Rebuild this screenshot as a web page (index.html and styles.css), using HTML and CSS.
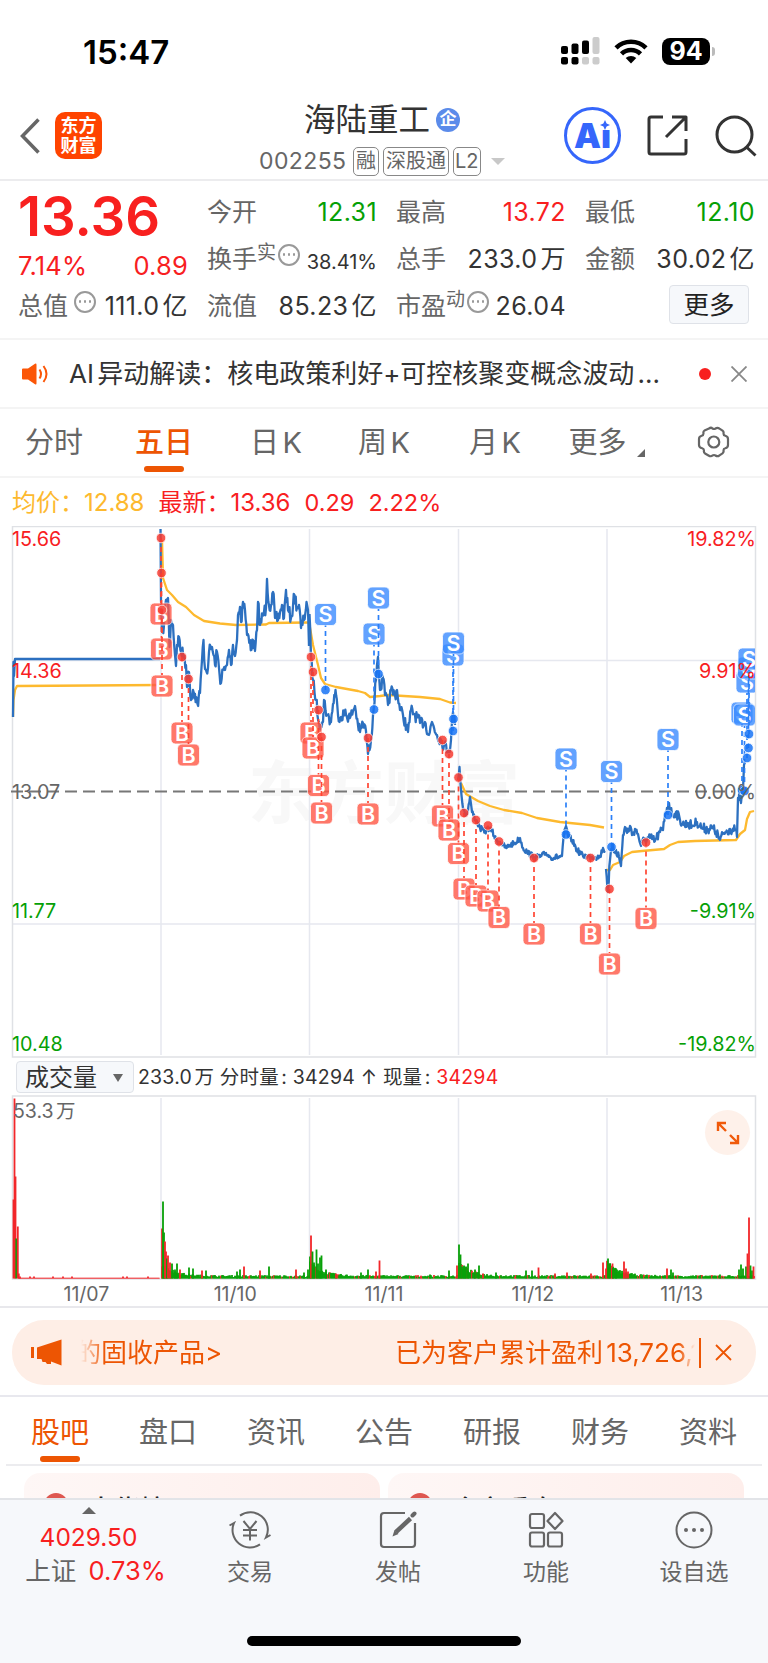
FILE: index.html
```html
<!DOCTYPE html>
<html lang="zh-CN">
<head>
    <meta charset="UTF-8">
    <meta name="viewport" content="width=device-width, initial-scale=1.0">
    <title>海陆重工 002255</title>
    <link rel="stylesheet" href="styles.css">
</head>
<body>
    <div class="status-bar">
        <span class="clock">15:47</span>
        <div class="status-icons">
            <svg width="39" height="28" viewBox="0 0 39 28">
                <g fill="#000">
                    <rect x="0" y="9" width="7" height="8" rx="2"/>
                    <rect x="10.5" y="6.500" width="7" height="10.500" rx="2"/>
                    <rect x="21" y="3.500" width="7" height="13.500" rx="2"/>
                    <rect x="0" y="20" width="7" height="7.500" rx="2"/>
                    <rect x="10.500" y="20" width="7" height="7.500" rx="2"/>
                </g>
                <g fill="#ccc">
                    <rect x="31.500" y="0" width="7" height="17" rx="2"/>
                    <rect x="21" y="20" width="7" height="7.500" rx="2"/>
                    <rect x="31.500" y="20" width="7" height="7.500" rx="2"/>
                </g>
            </svg>
            <svg class="wifi" width="34" height="25" viewBox="0 0 34 25">
                <g fill="none" stroke="#000" stroke-width="4.600">
                    <path d="M2 8.800a21.500 21.500 0 0 1 30 0"/>
                    <path d="M7.500 14.800a13.600 13.600 0 0 1 19 0"/>
                </g>
                <path d="M17 24.500l-5.300-5.600a8 8 0 0 1 10.600 0z"/>
            </svg>
            <span class="battery">94</span>
            <span class="battery-cap"></span>
        </div>
    </div>

    <header class="header">
        <div class="header-left">
            <svg width="20" height="36" viewBox="0 0 20 36" fill="none" stroke="#666" stroke-width="3.500"><path d="M18.500 1.500L2.500 18l16 16.500"/></svg>
            <div class="logo"><span>东方</span><span>财富</span></div>
        </div>
        <div class="header-title">
            <div class="name-row">
                <h1>海陆重工</h1>
                <span class="corp">企</span>
            </div>
            <div class="code-row">
                <span class="code">002255</span>
                <span class="tag">融</span>
                <span class="tag">深股通</span>
                <span class="tag">L2</span>
                <span class="caret"></span>
            </div>
        </div>
        <div class="header-right">
            <div class="ai">
                <span>Ai</span>
                <svg class="spark" width="10" height="10" viewBox="0 0 10 10"><path d="M5 0l1.600 3.400L10 5 6.600 6.600 5 10 3.400 6.600 0 5l3.400-1.600z" fill="#3566fb"/></svg>
            </div>
            <svg class="share" width="41" height="41" viewBox="0 0 41 41" fill="none" stroke="#333" stroke-width="3" stroke-linejoin="round">
                <path d="M16 2H4q-2 0-2 2v33q0 2 2 2h33q2 0 2-2V24"/>
                <path d="M25 2h14v14M39 2L19 22"/>
            </svg>
            <svg width="42" height="42" viewBox="0 0 42 42" fill="none" stroke="#333" stroke-width="3"><circle cx="19.500" cy="19.500" r="17.500"/><path d="M31.500 32l9 8.500"/></svg>
        </div>
    </header>

    <section class="quote">
        <div class="quote-col">
            <div class="price">13.36</div>
            <div class="cell change"><span>7.14%</span><span>0.89</span></div>
            <div class="cell"><span class="label">总值</span><i class="info"></i><span class="value">111.0亿</span></div>
        </div>
        <div class="quote-col">
            <div class="cell"><span class="label">今开</span><span class="value down">12.31</span></div>
            <div class="cell"><span class="label">换手</span><sup>实</sup><i class="info"></i><span class="value small">38.41%</span></div>
            <div class="cell"><span class="label">流值</span><span class="value">85.23亿</span></div>
        </div>
        <div class="quote-col">
            <div class="cell"><span class="label">最高</span><span class="value up">13.72</span></div>
            <div class="cell"><span class="label">总手</span><span class="value">233.0万</span></div>
            <div class="cell"><span class="label">市盈</span><sup>动</sup><i class="info"></i><span class="value">26.04</span></div>
        </div>
        <div class="quote-col">
            <div class="cell"><span class="label">最低</span><span class="value down">12.10</span></div>
            <div class="cell"><span class="label">金额</span><span class="value">30.02亿</span></div>
            <div class="cell"><button class="more-btn">更多</button></div>
        </div>
    </section>

    <section class="notice">
        <svg width="27" height="22" viewBox="0 0 27 22">
            <path d="M1 5.500h5L13 .8q1.500-.8 1.500 1v18.400q0 1.800-1.500 1L6 16.500H1q-1 0-1-1v-9q0-1 1-1z" fill="#fb5607"/>
            <path d="M17.500 6.500q3 4.500 0 9M21.500 3q6 8 0 16" fill="none" stroke="#fb5607" stroke-width="2"/>
        </svg>
        <p>AI异动解读：核电政策利好+可控核聚变概念波动...</p>
        <span class="dot"></span>
        <svg width="16" height="16" viewBox="0 0 16 16" stroke="#888" stroke-width="1.800"><path d="M.5.500l15 15M15.500.500l-15 15"/></svg>
    </section>

    <nav class="period-tabs">
        <span>分时</span>
        <span class="active">五日</span>
        <span>日K</span>
        <span>周K</span>
        <span>月K</span>
        <span class="period-more">更多<i class="corner"></i></span>
        <svg width="34" height="32" viewBox="0 0 34 32" fill="none" stroke="#666" stroke-width="2.200" stroke-linejoin="round">
            <path d="M12 2.500q2-1.500 3.500 0 1.500 1 3 0 2-1.500 4 .2l3 2q1.500 1.200 1 3 0 1.600 1.800 2 2.700.8 2.700 3.300v6q0 2.500-2.700 3.300-1.800.4-1.800 2 .5 1.800-1 3l-3 2q-2 1.700-4 .2-1.500-1-3 0-1.500 1.500-4 0l-3.500-2q-1.500-1.200-1-3 0-1.700-1.800-2.200Q2 21.500 2 19v-6q0-2.500 2.700-3.300 1.800-.5 1.800-2.200-.5-1.800 1-3z"/>
            <circle cx="16.800" cy="16" r="5.500"/>
        </svg>
    </nav>

    <div class="legend">
        <span class="avg">均价：12.88</span>
        <span>最新：13.36</span>
        <span>0.29</span>
        <span>2.22%</span>
    </div>

    <svg class="price-chart" id="priceChart" width="768" height="532" viewBox="0 526 768 532">
        <text class="watermark" x="384" y="818" text-anchor="middle">东方财富</text>
        <g class="grid-lines">
            <path d="M161 529v526M309.500 529v526M458.500 529v526M607 529v526M12 660.500h743M12 924h743"/>
            <rect x="12.500" y="526.500" width="743" height="530.500"/>
        </g>
        <path class="zero-line" d="M11 791.500h722"/>
        <g id="lines"></g>
        <g id="markers" clip-path="url(#plot)"></g>
        <clipPath id="plot"><rect x="12" y="526" width="743" height="531"/></clipPath>
        <g class="axis">
            <text class="up" x="12" y="545.500">15.66</text>
            <text class="up" x="12" y="678">14.36</text>
            <text x="12" y="798.500">13.07</text>
            <text class="down" x="12" y="918">11.77</text>
            <text class="down" x="12" y="1050.500">10.48</text>
        </g>
        <g class="axis axis-right">
            <text class="up" x="756" y="545.500">19.82%</text>
            <text class="up" x="756" y="678">9.91%</text>
            <text x="756" y="798.500">0.00%</text>
            <text class="down" x="756" y="918">-9.91%</text>
            <text class="down" x="756" y="1050.500">-19.82%</text>
        </g>
    </svg>

    <div class="volume-head">
        <button class="volume-btn">成交量<i></i></button>
        <span class="volume-info">233.0万 分时量: 34294 ↑ 现量: <b>34294</b></span>
    </div>

    <div class="volume-box">
        <svg id="volumeChart" width="768" height="185" viewBox="0 1095 768 185">
            <g class="grid-lines">
                <path d="M161 1098v180M309.500 1098v180M458.500 1098v180M607 1098v180"/>
                <rect x="12.500" y="1096" width="743" height="183"/>
            </g>
            <g id="bars"></g>
            <text class="volume-max" x="13" y="1118">53.3万</text>
        </svg>
        <span class="expand">
            <svg width="24" height="24" viewBox="0 0 24 24" fill="none" stroke="#f05a0a" stroke-width="2.400"><path d="M2 10V2h8M2 2l8 8M22 14v8h-8M22 22l-8-8"/></svg>
        </span>
    </div>

    <div class="dates">
        <span>11/07</span><span>11/10</span><span>11/11</span><span>11/12</span><span>11/13</span>
    </div>

    <section class="banner-wrap">
        <div class="banner">
            <svg width="31" height="27" viewBox="0 0 31 27" fill="#ed5503"><path d="M0 8h3v11H0zM6 8.500L30.500.500v26L20 22.500v2.500h-4l-1.500-2h-3l-1-3H6z"/></svg>
            <div class="marquee"><span>的固收产品&gt;</span><span>已为客户累计盈利13,726,1</span></div>
            <span class="divider"></span>
            <svg width="17" height="17" viewBox="0 0 17 17" stroke="#ed5503" stroke-width="1.800"><path d="M1 1l15 15M16 1L1 16"/></svg>
        </div>
    </section>

    <nav class="info-tabs">
        <span class="active">股吧</span>
        <span>盘口</span>
        <span>资讯</span>
        <span>公告</span>
        <span>研报</span>
        <span>财务</span>
        <span>资料</span>
    </nav>

    <div class="cards">
        <div class="card"><i></i><span>大佬榜</span></div>
        <div class="card"><i></i><span>今市看盘</span></div>
    </div>

    <footer class="bottom-bar">
        <div class="bottom-items">
            <div class="index">
                <i class="tri"></i>
                <span class="up">4029.50</span>
                <span class="index-name">上证 <b>0.73%</b></span>
            </div>
            <div class="action">
                <svg width="42" height="38" viewBox="0 0 42 38" fill="none" stroke="#666" stroke-width="2">
                    <path d="M11 4.600A17.500 17.500 0 0 1 37 26.500l4.500-2.500M31 33.400A17.500 17.500 0 0 1 5 12L.5 14.500"/>
                    <path d="M14.500 10l6.500 8 6.500-8M21 18v11.500M14 19h14M14 24.500h14"/>
                </svg>
                <span>交易</span>
            </div>
            <div class="action">
                <svg width="38" height="38" viewBox="0 0 38 38" fill="none" stroke="#666" stroke-width="2.200">
                    <path d="M26 2H5Q2 2 2 5v28q0 3 3 3h28q3 0 3-3V12"/>
                    <path d="M35.500 2.500l-2 2" stroke-width="4" stroke-linecap="round"/>
                    <path d="M31.500 7.500L17 21" stroke-width="4.500"/>
                    <path d="M15.500 19l4 4-6 2.500z" fill="#666" stroke="none"/>
                </svg>
                <span>发帖</span>
            </div>
            <div class="action">
                <svg width="36" height="36" viewBox="0 0 36 36" fill="none" stroke="#666" stroke-width="2.200" stroke-linejoin="round">
                    <rect x="2" y="2" width="14" height="14" rx="2"/>
                    <rect x="2" y="20.500" width="14" height="14" rx="2"/>
                    <rect x="20" y="20.500" width="14" height="14" rx="2"/>
                    <path d="M27 1l7.500 8L27 17l-7.500-8z"/>
                </svg>
                <span>功能</span>
            </div>
            <div class="action">
                <svg width="38" height="38" viewBox="0 0 38 38" fill="#666">
                    <circle cx="19" cy="19" r="17.500" fill="none" stroke="#666" stroke-width="2"/>
                    <circle cx="11" cy="19" r="2"/><circle cx="19" cy="19" r="2"/><circle cx="27" cy="19" r="2"/>
                </svg>
                <span>设自选</span>
            </div>
        </div>
        <div class="home-indicator"></div>
    </footer>

    <script src="script.js"></script>
</body>
</html>
```
FILE: styles.css
```css
* {
    box-sizing: border-box;
}

body {
    width: 768px;
    height: 1663px;
    margin: 0;
    overflow: hidden;
    background: #fff;
    color: #333;
    font-family: Inter, "Noto Sans CJK SC", sans-serif;
    line-height: 1;
    text-autospace: normal;
}

button {
    font-family: inherit;
    color: inherit;
}

h1, p {
    margin: 0;
}

svg {
    display: block;
    flex: none;
}

.up {
    color: #f8201f;
    fill: #f8201f;
}

.down {
    color: #06a006;
    fill: #06a006;
}

/* status bar */
.status-bar {
    display: flex;
    justify-content: space-between;
    height: 92px;
    padding: 34px 53px 0 83px;
    color: #000;
}

.clock {
    font-size: 33px;
    font-weight: 600;
    line-height: 36px;
}

.status-icons {
    display: flex;
    align-items: center;
    height: 34px;
}

.wifi {
    margin: 0 14px 0 14px;
}

.battery {
    width: 48px;
    height: 27px;
    border-radius: 8px;
    background: #000;
    color: #fff;
    font-size: 25px;
    font-weight: 700;
    line-height: 27px;
    text-align: center;
}

.battery-cap {
    width: 3px;
    height: 9px;
    margin-left: 2px;
    border-radius: 0 4px 4px 0;
    background: #bbb;
}

/* header */
.header {
    display: grid;
    grid-template-columns: 240px 1fr 210px;
    height: 89px;
    border-bottom: 2px solid #ececee;
}

.header-left {
    display: flex;
    align-items: center;
    height: 87px;
    padding-left: 20px;
    gap: 15px;
}

.logo {
    display: flex;
    flex-direction: column;
    align-items: center;
    justify-content: center;
    width: 47px;
    height: 47px;
    border-radius: 10px;
    background: #ff4400;
    color: #fff;
    font-size: 18px;
    font-weight: 700;
    line-height: 20px;
}

.name-row {
    display: flex;
    align-items: center;
    justify-content: center;
    gap: 6px;
    height: 42px;
    padding: 14px 34px 0 0;
}

.name-row h1 {
    font-size: 31.5px;
    font-weight: 400;
}

.corp {
    width: 24px;
    height: 24px;
    border-radius: 50%;
    background: #5b8bea;
    color: #fff;
    font-size: 17px;
    font-weight: 700;
    line-height: 23px;
    text-align: center;
}

.code-row {
    display: flex;
    align-items: center;
    gap: 4px;
    height: 30px;
    margin-top: 12px;
    padding-left: 19px;
    color: #666;
    font-size: 23px;
}

.code {
    width: 90px;
    letter-spacing: 0.400px;
}

.tag {
    height: 29px;
    padding: 0 2px;
    border: 1.500px solid #888;
    border-radius: 5px;
    font-size: 20px;
    line-height: 26px;
}

.tag:nth-child(4) {
    padding: 0 1px;
}

.caret {
    margin-left: 6px;
    border: 7px solid transparent;
    border-top-color: #c8c8c8;
    border-bottom: 0;
}

.header-right {
    display: flex;
    align-items: center;
    height: 87px;
    padding-left: 6px;
}

.ai {
    position: relative;
    width: 57px;
    height: 57px;
    border: 3px solid #3566fb;
    border-radius: 50%;
    color: #3566fb;
    font-size: 34px;
    font-weight: 900;
    line-height: 51px;
    text-align: center;
}

.spark {
    position: absolute;
    top: 10px;
    right: 8px;
    background: #fff;
}

.share {
    margin: 0 27px 0 26px;
}

/* quote */
.quote {
    display: grid;
    grid-template-columns: 170px 170px 170px 170px;
    column-gap: 19px;
    height: 159px;
    padding: 8px 0 0 18px;
    border-bottom: 2px solid #f4f4f4;
}

.cell {
    display: flex;
    align-items: center;
    height: 47px;
    white-space: nowrap;
}

.price {
    height: 53px;
    color: #f8201f;
    font-size: 54.500px;
    font-weight: 600;
    line-height: 54px;
}

.change {
    justify-content: space-between;
    height: 41px;
    padding-top: 7px;
    color: #f8201f;
    font-size: 25.500px;
    letter-spacing: 0.200px;
}

.label {
    color: #666;
    font-size: 25px;
}

.value {
    margin-left: auto;
    font-size: 25px;
    letter-spacing: 0.400px;
}

.value.small {
    font-size: 20px;
    padding-top: 5px;
    letter-spacing: 0;
}

.cell sup {
    align-self: flex-start;
    padding-top: 7px;
    color: #666;
    font-size: 19px;
    line-height: 19px;
}

.info {
    display: flex;
    align-items: center;
    justify-content: center;
    width: 22px;
    height: 22px;
    margin: 0 0 10px 2px;
    border: 2px solid #999;
    border-radius: 50%;
}

.info::before {
    content: "";
    width: 2.500px;
    height: 2.500px;
    border-radius: 50%;
    background: #999;
    box-shadow: -5px 0 #999, 5px 0 #999;
}

.label + .info {
    margin-left: 6px;
}

.more-btn {
    width: 80px;
    height: 39px;
    margin: 0 6px 4px auto;
    padding: 0;
    border: 1.500px solid #dfe2e8;
    border-radius: 4px;
    background: #f6f8fb;
    color: #222;
    font-size: 25.500px;
    line-height: 34px;
}

/* notice */
.notice {
    display: flex;
    align-items: center;
    height: 69px;
    padding-left: 22px;
    border-bottom: 2px solid #f4f4f4;
}

.notice p {
    width: 629px;
    padding-left: 20px;
    font-size: 26px;
    white-space: nowrap;
}

.dot {
    width: 12px;
    height: 12px;
    margin: 0 20px 0 21px;
    border-radius: 50%;
    background: #f8201f;
}

/* period tabs */
.period-tabs {
    display: grid;
    grid-template-columns: 108px 112px 112px 104px 118px 87px 1fr;
    align-items: center;
    justify-items: center;
    height: 69px;
    border-bottom: 2px solid #f4f4f4;
    color: #666;
    font-size: 29px;
}

.period-tabs span {
    white-space: nowrap;
}

.period-tabs svg {
    margin-left: 18px;
    margin-top: -2px;
}

.period-tabs .active, .info-tabs .active {
    position: relative;
    color: #ed5503;
}

.period-tabs .active {
    font-weight: 500;
}

.active::after {
    content: "";
    position: absolute;
    left: 50%;
    top: 38px;
    width: 40px;
    height: 6px;
    margin-left: -20px;
    border-radius: 3px;
    background: #ed5503;
}

.period-more {
    position: relative;
}

.corner {
    position: absolute;
    right: -18px;
    bottom: 0;
    border-left: 8px solid transparent;
    border-bottom: 8px solid #666;
}

/* price chart */
.legend {
    display: flex;
    align-items: center;
    gap: 14px;
    height: 49px;
    margin-bottom: -1px;
    padding-left: 12px;
    color: #f8201f;
    font-size: 24px;
}

.legend span:nth-child(n+3) {
    font-size: 23.500px;
}

.legend .avg {
    color: #fdb92e;
}

.watermark {
    fill: #f8f8f8;
    font-size: 68px;
    font-weight: 700;
}

.grid-lines path {
    stroke: #e6e8ef;
    stroke-width: 1.500;
}

.grid-lines rect {
    fill: none;
    stroke: #dfe1e5;
    stroke-width: 1.500;
}

.zero-line {
    stroke: #777;
    stroke-width: 2.200;
    stroke-dasharray: 12 6;
}

.axis text {
    font-size: 19.800px;
    fill: #666;
}

.axis .up {
    fill: #f8201f;
}

.axis .down {
    fill: #06a006;
}

.axis-right {
    text-anchor: end;
}

.price-line, .avg-line {
    fill: none;
    stroke: #2c70c0;
    stroke-width: 2.300;
    stroke-linejoin: round;
}

.avg-line {
    stroke: #fdb92e;
}

.marker line {
    stroke-width: 1.700;
    stroke-dasharray: 5 4;
}

.marker circle {
    stroke: #fff;
    stroke-width: 0.800;
    opacity: 0.850;
}

.marker rect {
    stroke: #fff;
    stroke-width: 0.800;
    opacity: 0.800;
}

.marker text {
    fill: #fff;
    font-size: 21.500px;
    font-weight: 600;
    text-anchor: middle;
}

.buy line {
    stroke: #ff4532;
}

.buy circle {
    fill: #f63c32;
}

.buy rect {
    fill: #ff5746;
}

.sell line {
    stroke: #2b80f8;
}

.sell circle {
    fill: #1874f5;
}

.sell rect {
    fill: #3b8cff;
}

/* volume */
.volume-head {
    display: flex;
    align-items: center;
    height: 37px;
    padding-left: 16px;
}

.volume-btn {
    display: flex;
    align-items: center;
    width: 118px;
    height: 32px;
    margin-right: 4px;
    padding: 2px 0 0 8px;
    border: 1.500px solid #dfe2e8;
    border-radius: 4px;
    background: #f6f8fb;
    font-size: 24px;
    line-height: 28px;
}

.volume-btn i {
    margin-left: 16px;
    border: 5px solid transparent;
    border-top: 8px solid #666;
    border-bottom: 0;
}

.volume-info {
    padding-top: 3px;
    font-size: 19.500px;
    letter-spacing: 0.200px;
    white-space: pre;
}

.volume-info b {
    color: #f8201f;
    font-weight: 400;
}

.volume-box {
    position: relative;
    height: 185px;
}

.volume-max {
    fill: #666;
    font-size: 19.500px;
}

.expand {
    position: absolute;
    top: 15px;
    right: 18px;
    display: flex;
    align-items: center;
    justify-content: center;
    width: 45px;
    height: 45px;
    border-radius: 50%;
    background: #fef1ea;
}

.dates {
    display: grid;
    grid-template-columns: repeat(5, 1fr);
    align-items: center;
    justify-items: center;
    height: 28px;
    padding: 3px 12px 0;
    border-bottom: 2px solid #e8e8ec;
    color: #666;
    font-size: 19.500px;
}

/* banner */
.banner-wrap {
    height: 89px;
    padding: 12px 12px 0;
    border-bottom: 2px solid #e8e8ee;
}

.banner {
    display: flex;
    align-items: center;
    height: 65px;
    padding: 0 24px 0 19px;
    border-radius: 32px;
    background: #feeee6;
    color: #ed5503;
    font-size: 26px;
}

.marquee {
    display: flex;
    justify-content: space-between;
    width: 614px;
    margin: 0 4px 0 19px;
    overflow: hidden;
    line-height: 40px;
    white-space: nowrap;
    -webkit-mask-image: linear-gradient(to right, transparent, #000 24px, #000 598px, transparent);
    mask-image: linear-gradient(to right, transparent, #000 24px, #000 598px, transparent);
}

.marquee span:first-child {
    margin-left: -6px;
}

.marquee span:last-child {
    margin-right: -6px;
}

.divider {
    width: 1.500px;
    height: 30px;
    margin-right: 14px;
    background: #ed5503;
}

/* info tabs */
.info-tabs {
    display: grid;
    grid-template-columns: repeat(7, 108px);
    align-items: center;
    justify-items: center;
    height: 69px;
    margin: 0 6px;
    padding-top: 3px;
    border-bottom: 2px solid #ececef;
    color: #666;
    font-size: 29px;
}

.info-tabs .active::after {
    top: 38px;
}

.cards {
    display: flex;
    gap: 8px;
    height: 32px;
    padding: 7px 24px 0;
    overflow: hidden;
}

.card {
    display: flex;
    width: 356px;
    height: 80px;
    padding: 20px 20px 0;
    border-radius: 16px;
    background: linear-gradient(to right, #fef7f6, #feeeeb);
    color: #222;
    font-size: 26px;
    font-weight: 500;
    line-height: 34px;
}

.card i {
    width: 24px;
    height: 24px;
    margin-right: 20px;
    border-radius: 50%;
    background: #de5750;
}

/* bottom bar */
.bottom-bar {
    height: 166px;
    border-top: 2px solid #e2e4e8;
    background: #f6f8fb;
}

.bottom-items {
    display: grid;
    grid-template-columns: 176px repeat(4, 148px);
    height: 136px;
    color: #666;
}

.index {
    display: flex;
    flex-direction: column;
    align-items: center;
    padding: 7px 0 0 1px;
}

.index .tri {
    border: 7px solid transparent;
    border-bottom-color: #666;
    border-top: 0;
    margin-bottom: 11px;
}

.index span {
    height: 34px;
    font-size: 24.500px;
    line-height: 24px;
    white-space: nowrap;
}

.index .index-name {
    padding-left: 14px;
    font-size: 25.500px;
}

.index b {
    margin-left: 5px;
    color: #f8201f;
    font-weight: 400;
}

.action {
    display: flex;
    flex-direction: column;
    align-items: center;
    font-size: 23px;
}

.action svg {
    height: 38px;
    margin: 11px 0 12px;
}

.home-indicator {
    width: 274px;
    height: 10px;
    margin: 0 auto;
    border-radius: 5px;
    background: #000;
}
```
FILE: script.js
```js
const SVG_NS = 'http://www.w3.org/2000/svg';

const prices = [
    [[13, 717], [13.5, 662], [14, 676], [15, 659], [160, 659]],
    [[160.500, 529], [161, 600], [162, 632], [164, 625], [166, 600], [168, 598], [169.500, 647], [171, 620], [173, 625], [175, 655], [176, 666], [177, 645], [179, 637], [181, 652], [184, 656], [186, 665], [187, 687], [189, 672], [191, 700], [193, 690], [195, 694], [197.500, 704], [200, 693], [202, 660], [203.500, 640], [205, 669], [208, 668], [209, 652], [212, 647], [215, 665], [217, 652], [219, 668], [221, 683], [223, 670], [225, 670], [227, 665], [229, 650], [231, 665], [233, 645], [235, 656], [237, 640], [238, 615], [240, 607], [241, 622], [243, 602], [245, 610], [247, 635], [250, 640], [251.500, 650], [253, 640], [255, 651], [257, 630], [258, 602], [260, 625], [264, 612], [266, 608], [267, 579], [269, 605], [271, 605], [273, 592], [275, 618], [278, 620], [280, 612], [282, 605], [284, 618], [286, 590], [288, 610], [291, 618], [293, 606], [294.500, 595], [297, 607], [299, 605], [301, 628], [304, 620], [306.500, 602], [308, 610], [309, 646]],
    [[309.500, 614], [311, 657], [313, 680], [316, 700], [319, 722], [321, 725], [323, 722], [324, 700], [327, 715], [331, 722], [333, 704], [335.500, 690], [338, 715], [341, 717], [344, 713], [350, 718], [353, 711], [355, 706], [358, 725], [360, 732], [363, 723], [366, 731], [368, 754], [371, 740], [373, 715], [376, 680], [377, 665], [378, 657], [380, 690], [383, 678], [385, 695], [388, 705], [391, 690], [395, 695], [397, 690], [400, 710], [403, 715], [408, 732], [411, 710], [415, 715], [420, 723], [425, 722], [429, 735], [432, 722], [437, 735], [441, 740], [444, 745], [449, 750], [451, 740], [453, 712], [455, 725]],
    [[458, 780], [459.500, 767], [461, 790], [463, 808], [466, 815], [468, 810], [470, 797], [472, 812], [476, 820], [480, 828], [485, 832], [488, 828], [492, 831], [496, 840], [500, 842], [506, 848], [510, 845], [515, 843], [520, 838], [523, 848], [527, 852], [534, 857], [540, 857], [546, 853], [550, 857], [558, 857], [562, 856], [564, 835], [566, 826], [568, 836], [572, 840], [577, 850], [583, 856], [595, 857], [600, 857], [603, 848], [605, 851]],
    [[606, 869], [608, 892], [610, 860], [612, 848], [616, 850], [619, 857], [621, 866], [623, 835], [625, 827], [627, 833], [630, 826], [632, 835], [635, 829], [638, 834], [641, 846], [644, 840], [650, 838], [655, 841], [660, 832], [663, 830], [665, 815], [667, 808], [669, 803], [672, 815], [676, 812], [680, 820], [684, 825], [688, 823], [692, 826], [697, 822], [702, 828], [708, 829], [712, 828], [716, 832], [720, 840], [724, 833], [730, 829], [735, 830], [737, 837], [738, 798], [740, 794], [741, 803], [743, 790], [744, 765], [745, 762]]
];

const averages = [
    [[13, 717], [13.500, 700], [15, 690], [17, 686], [90, 685.500], [160, 685]],
    [[162, 540], [163, 578], [167, 590], [172, 595], [178, 602], [186, 607], [194, 615], [204, 621], [220, 623.500], [236, 625], [266, 624.500], [269, 623], [308, 622.500]],
    [[309, 622], [313, 645], [318, 665], [321, 678], [325, 684], [336, 687], [358, 691], [365, 693], [370, 697], [380, 696], [388, 695], [420, 697], [440, 699], [450, 702.500], [456, 703]],
    [[461, 783], [466, 794], [478, 801], [490, 806], [504, 810], [522, 813], [537, 818], [560, 822], [590, 825], [604, 827.500]],
    [[606, 870], [610, 870], [613, 865], [620, 862], [624, 856], [632, 852], [642, 851], [664, 849], [670, 845], [678, 842], [695, 841], [736, 840], [740, 834], [745, 830], [747, 819], [750, 812], [754, 811]]
];

// x, price point y, badge y
const buys = [
    [161, 538, 614], [161.500, 573, 649], [162, 610, 686], [182, 657, 733], [188.500, 679, 755],
    [311, 657, 733], [313, 672, 748], [318.500, 710, 785.500], [321.500, 737, 813], [368, 738, 814],
    [442.500, 740, 816], [449, 754, 830], [458.500, 777.500, 853.500], [464, 813, 889], [476, 820, 896],
    [488, 825.500, 901], [499, 841.500, 917.500], [534, 858, 934], [590.500, 858, 934],
    [609.500, 889, 964], [646, 842.500, 918.500]
];
const sells = [
    [325.500, 690, 614.500], [374, 709.500, 634], [378.500, 674, 598], [453, 731, 655], [453.500, 719, 643],
    [566, 834.500, 759], [611.500, 847, 771.500], [668, 815, 739.500],
    [742, 790, 713], [744.500, 791, 715], [747, 758, 682], [748.500, 748, 668], [749, 734, 659]
];

let seed = 7;
function random() {
    seed = (seed * 16807) % 2147483647;
    return seed / 2147483647;
}

function add(parent, name, attrs, text) {
    const el = document.createElementNS(SVG_NS, name);
    for (const key in attrs) el.setAttribute(key, attrs[key]);
    if (text) el.textContent = text;
    parent.appendChild(el);
    return el;
}

// minute ticks between the known points
function withTicks(points, amount) {
    const result = [];
    points.forEach(([x, y], i) => {
        result.push([x, y]);
        const next = points[i + 1];
        if (!next || next[0] - x > 40) return;
        const steps = Math.round((next[0] - x) / 0.700);
        for (let s = 1; s < steps; s++) {
            const t = s / steps;
            result.push([x + (next[0] - x) * t, y + (next[1] - y) * t + (random() - 0.500) * amount]);
        }
    });
    return result;
}

const lines = document.getElementById('lines');
averages.forEach(day => add(lines, 'polyline', { class: 'avg-line', points: day.join(' ') }));
const noise = [0, 14, 12, 6, 10];
prices.forEach((day, i) => add(lines, 'polyline', { class: 'price-line', points: withTicks(day, noise[i]).join(' ') }));

function drawMarkers(list, type, letter) {
    const layer = document.getElementById('markers');
    list.forEach(([x, y, badge]) => {
        const g = add(layer, 'g', { class: 'marker ' + type });
        const edge = badge > y ? badge - 11 : badge + 11;
        add(g, 'rect', { x: x - 11, y: badge - 11, width: 22, height: 22, rx: 4.500 });
        add(g, 'text', { x: x, y: badge + 7.700 }, letter);
        add(g, 'line', { x1: x, y1: y, x2: x, y2: edge });
        add(g, 'circle', { cx: x, cy: y, r: 4.800 });
    });
}
drawMarkers(buys, 'buy', 'B');
drawMarkers(sells, 'sell', 'S');

// x, bar height, r(ed) or g(reen)
const spikes = [
    [13.500, 79, 'r'], [14.500, 180, 'r'], [15.500, 102, 'r'], [16.300, 40, 'g'], [17.800, 52, 'r'], [18.800, 5, 'r'], [20, 2, 'r'],
    [162, 50, 'r'], [163, 77, 'g'], [164, 46, 'g'], [165, 37, 'r'], [166, 27, 'r'], [167, 20, 'g'], [168, 23, 'r'], [170, 16, 'r'],
    [172, 15, 'g'], [175, 9, 'g'], [177, 15, 'g'], [180, 9, 'r'], [189, 11, 'g'], [193, 10, 'g'], [202, 8, 'r'], [206, 8, 'g'],
    [237, 7, 'g'], [240, 9, 'g'], [244, 12, 'r'], [260, 8, 'r'], [269, 12, 'g'], [296, 9, 'r'], [304, 6, 'g'], [308, 9, 'g'],
    [310, 22, 'g'], [311, 43, 'r'], [312.500, 27, 'g'], [314, 16, 'g'], [316.500, 29, 'g'], [318, 15, 'g'], [320, 21, 'g'], [321.500, 23, 'g'],
    [326, 9, 'g'], [336, 5, 'r'], [361, 6, 'g'], [368, 9, 'g'], [376, 7, 'r'], [379.500, 18, 'r'], [430, 4, 'g'], [449, 8, 'g'], [457, 13, 'r'],
    [459, 34, 'g'], [460.500, 24, 'g'], [462, 12, 'g'], [464, 13, 'g'], [466, 12, 'g'], [468, 15, 'g'], [475, 9, 'g'], [479, 13, 'g'],
    [483, 5, 'r'], [496, 6, 'g'], [526, 8, 'g'], [532, 8, 'g'], [538.500, 11, 'r'], [555, 5, 'r'], [567, 6, 'r'], [591, 5, 'r'],
    [603, 16, 'r'], [606, 10, 'r'], [608, 20, 'g'], [610, 15, 'g'], [612.500, 15, 'r'], [613, 11, 'g'], [616, 6, 'g'], [624, 17, 'r'],
    [626, 10, 'r'], [628, 7, 'r'], [667, 10, 'r'], [671, 9, 'g'], [673, 6, 'g'], [720, 4, 'g'], [739, 9, 'g'], [741, 14, 'g'],
    [743, 10, 'g'], [746, 12, 'g'], [747.500, 25, 'r'], [749, 61, 'r'], [750.500, 13, 'g'], [752, 8, 'g'], [753.500, 12, 'r']
];
const colors = { r: '#f2262a', g: '#08a008' };
const bars = document.getElementById('bars');

function drawBar(x, height, color) {
    add(bars, 'rect', { x: x - 0.900, y: 1278.500 - height, width: 1.800, height: height, fill: colors[color] });
}

for (let x = 19; x < 160; x++) drawBar(x, random() > 0.950 ? 2 : 0.700, 'r');
for (let x = 162; x < 755; x += 1) {
    const fromOpen = (x - 161) % 148.600;
    const base = 1.400 + 11 * Math.exp(-fromOpen / 12);
    drawBar(x, base + random() * (1.500 + base * 0.400), random() > 0.850 ? 'r' : 'g');
}
spikes.forEach(([x, height, color]) => drawBar(x, height, color));
```
